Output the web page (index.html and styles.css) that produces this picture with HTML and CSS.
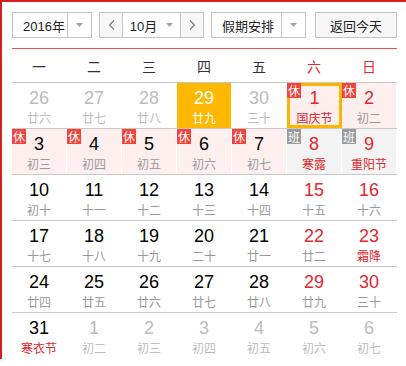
FILE: index.html
```html
<!DOCTYPE html>
<html lang="zh">
<head>
<meta charset="utf-8">
<title>万年历</title>
<link rel="stylesheet" href="styles.css">
</head>
<body>
<div class="cal">
  <div class="toolbar">
    <div class="box sel year">
      <span class="val">2016年</span>
      <span class="arr"><svg width="7" height="4" viewBox="0 0 7 4"><polygon points="0,0 7,0 3.5,4" fill="#a3a3a3"/></svg></span>
    </div>
    <div class="box mgroup">
      <span class="nav"><svg width="7" height="10" viewBox="0 0 7 10"><polyline points="6,0.5 1.5,5 6,9.5" fill="none" stroke="#777" stroke-width="1.1"/></svg></span>
      <span class="mid">10月<svg width="7" height="4" viewBox="0 0 7 4"><polygon points="0,0 7,0 3.5,4" fill="#a3a3a3"/></svg></span>
      <span class="nav"><svg width="7" height="10" viewBox="0 0 7 10"><polyline points="1,0.5 5.5,5 1,9.5" fill="none" stroke="#777" stroke-width="1.1"/></svg></span>
    </div>
    <div class="box sel holiday">
      <span class="val">假期安排</span>
      <span class="arr"><svg width="7" height="4" viewBox="0 0 7 4"><polygon points="0,0 7,0 3.5,4" fill="#a3a3a3"/></svg></span>
    </div>
    <div class="box today-btn">返回今天</div>
  </div>

  <div class="weekdays">
    <span>一</span><span>二</span><span>三</span><span>四</span><span>五</span><span class="we">六</span><span class="we">日</span>
  </div>

  <div class="grid">
    <div class="row">
      <div class="c o"><b>26</b><i>廿六</i></div>
      <div class="c o"><b>27</b><i>廿七</i></div>
      <div class="c o"><b>28</b><i>廿八</i></div>
      <div class="c today"><b>29</b><i>廿九</i></div>
      <div class="c o"><b>30</b><i>三十</i></div>
      <div class="c rest sel w fest"><span class="tag">休</span><b>1</b><i>国庆节</i></div>
      <div class="c rest w"><span class="tag">休</span><b>2</b><i>初二</i></div>
    </div>
    <div class="row">
      <div class="c rest"><span class="tag">休</span><b>3</b><i>初三</i></div>
      <div class="c rest"><span class="tag">休</span><b>4</b><i>初四</i></div>
      <div class="c rest"><span class="tag">休</span><b>5</b><i>初五</i></div>
      <div class="c rest"><span class="tag">休</span><b>6</b><i>初六</i></div>
      <div class="c rest"><span class="tag">休</span><b>7</b><i>初七</i></div>
      <div class="c work w fest"><span class="tag ban">班</span><b>8</b><i>寒露</i></div>
      <div class="c work w fest"><span class="tag ban">班</span><b>9</b><i>重阳节</i></div>
    </div>
    <div class="row">
      <div class="c"><b>10</b><i>初十</i></div>
      <div class="c"><b>11</b><i>十一</i></div>
      <div class="c"><b>12</b><i>十二</i></div>
      <div class="c"><b>13</b><i>十三</i></div>
      <div class="c"><b>14</b><i>十四</i></div>
      <div class="c w"><b>15</b><i>十五</i></div>
      <div class="c w"><b>16</b><i>十六</i></div>
    </div>
    <div class="row">
      <div class="c"><b>17</b><i>十七</i></div>
      <div class="c"><b>18</b><i>十八</i></div>
      <div class="c"><b>19</b><i>十九</i></div>
      <div class="c"><b>20</b><i>二十</i></div>
      <div class="c"><b>21</b><i>廿一</i></div>
      <div class="c w"><b>22</b><i>廿二</i></div>
      <div class="c w fest"><b>23</b><i>霜降</i></div>
    </div>
    <div class="row">
      <div class="c"><b>24</b><i>廿四</i></div>
      <div class="c"><b>25</b><i>廿五</i></div>
      <div class="c"><b>26</b><i>廿六</i></div>
      <div class="c"><b>27</b><i>廿七</i></div>
      <div class="c"><b>28</b><i>廿八</i></div>
      <div class="c w"><b>29</b><i>廿九</i></div>
      <div class="c w"><b>30</b><i>三十</i></div>
    </div>
    <div class="row last">
      <div class="c fest"><b>31</b><i>寒衣节</i></div>
      <div class="c o"><b>1</b><i>初二</i></div>
      <div class="c o"><b>2</b><i>初三</i></div>
      <div class="c o"><b>3</b><i>初四</i></div>
      <div class="c o"><b>4</b><i>初五</i></div>
      <div class="c o"><b>5</b><i>初六</i></div>
      <div class="c o"><b>6</b><i>初七</i></div>
    </div>
  </div>
</div>
</body>
</html>
```

FILE: styles.css
```css
* { box-sizing: border-box; }

html, body {
  margin: 0;
  padding: 0;
  background: #fff;
}

body {
  font-family: "Liberation Sans", "Noto Sans CJK SC", sans-serif;
  color: #000;
}

.cal {
  border-top: 2px solid #d61f1f;
  border-left: 2px solid #d61f1f;
  padding-left: 10px;
}

/* toolbar */
.toolbar {
  width: 385px;
  display: flex;
  align-items: center;
  padding: 10px 0 10px;
  border-bottom: 1px solid #f04f4f;
}

.box {
  height: 26px;
  border: 1px solid #c4c4c4;
  display: flex;
  align-items: stretch;
  font-size: 13px;
  color: #222;
  background: #fff;
}

.sel .val {
  display: flex;
  align-items: center;
  padding-left: 10px;
  border-right: 1px solid #c4c4c4;
}

.sel .arr {
  width: 23px;
  display: flex;
  align-items: center;
  justify-content: center;
}

.year { width: 80px; margin-right: 7px; }
.year .val { width: 55px; }

.mgroup { width: 105px; margin-right: 7px; }
.mgroup .nav {
  width: 23px;
  display: flex;
  align-items: center;
  justify-content: center;
  background: #f7f7f7;
}
.mgroup .nav:first-child { border-right: 1px solid #c4c4c4; }
.mgroup .nav:last-child { border-left: 1px solid #c4c4c4; }
.mgroup .mid {
  flex: 1;
  display: flex;
  align-items: center;
  justify-content: center;
  gap: 9px;
}

.holiday { width: 95px; margin-right: 9px; }
.holiday .val { width: 70px; }

.today-btn {
  width: 82px;
  background: #f7f7f7;
  justify-content: center;
  align-items: center;
}

/* weekday header */
.weekdays {
  width: 385px;
  height: 34px;
  display: grid;
  grid-template-columns: repeat(7, 55px);
  align-items: center;
  border-bottom: 1px solid #c8c8c8;
  font-family: "Noto Sans CJK SC", sans-serif;
  font-size: 14px;
  color: #333;
}
.weekdays span {
  text-align: center;
  padding-right: 1px;
}
.weekdays .we { color: #e12a2a; }

/* day grid */
.grid { width: 385px; }

.row {
  display: grid;
  grid-template-columns: repeat(7, 55px);
  height: 46px;
  border-bottom: 1px solid #c8c8c8;
}
.row.last { border-bottom: none; }

.c {
  position: relative;
  height: 45px;
  border-right: 1px solid #fff;
  padding-top: 4px;
  display: flex;
  flex-direction: column;
  align-items: center;
}

.c b {
  font-weight: normal;
  font-size: 18px;
  line-height: 22px;
  color: #000;
}

.c i {
  font-style: normal;
  font-family: "Noto Sans CJK SC", sans-serif;
  font-size: 12px;
  line-height: 16px;
  margin-top: 1px;
  color: #999;
}

.c.w b { color: #e0282e; }
.c.fest i { color: #e0262b; }

.c.o b, .c.o i { color: #bcbcbc; }

.c.rest { background: #fdefee; }
.c.work { background: #f3f3f3; }

.c.today { background: #ffb800; }
.c.today b, .c.today i { color: #fff; }

.c.sel {
  border: 3px solid #ffb400;
  padding-top: 1px;
}

.tag {
  position: absolute;
  top: 0;
  left: 0;
  width: 14px;
  height: 15px;
  background: #f4433a;
  color: #fff;
  font-family: "Noto Sans CJK SC", sans-serif;
  font-size: 12px;
  line-height: 15px;
  text-align: center;
}
.tag.ban { background: #9a9a9a; }
.c.sel .tag { top: -3px; left: -3px; }
```
